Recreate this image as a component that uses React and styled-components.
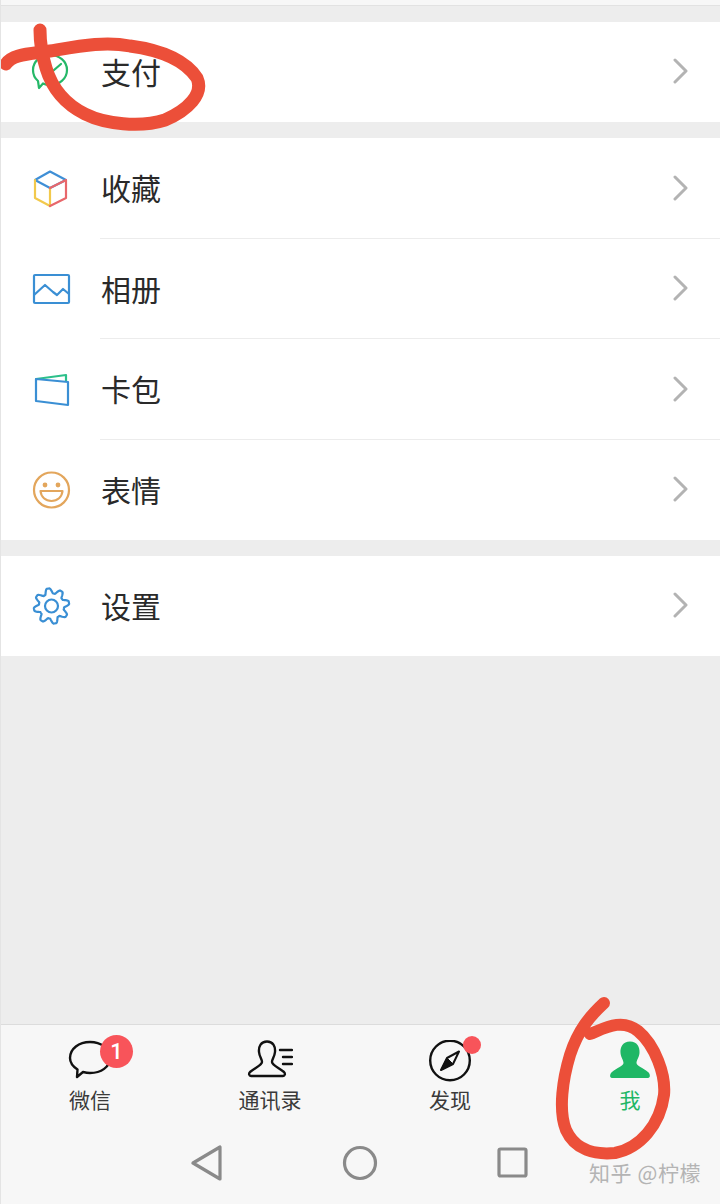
import React from "react"
import styled, { createGlobalStyle } from "styled-components"

const Global = createGlobalStyle`
  html, body { margin: 0; padding: 0; }
  body { background: #ededed; font-family: "Noto Sans CJK SC", "Noto Sans", sans-serif; }
`

const Screen = styled.div`
  position: relative;
  width: 720px;
  height: 1204px;
  display: flex;
  flex-direction: column;
  overflow: hidden;
  background: #ededed;
  border-left: 1px solid #e4e4e4;
  box-sizing: border-box;
`

const TopEdge = styled.div`
  height: 5px;
  margin-left: -1px;
  background: #f7f7f7;
  border-bottom: 1px solid #e2e2e2;
`

const Group = styled.section`
  margin-top: 16px;
  background: #fff;
  display: flex;
  flex-direction: column;
`

const Row = styled.div`
  position: relative;
  height: ${p => p.$h || 100}px;
  display: flex;
  align-items: center;
  padding-left: 30px;
  &:not(:last-child)::after {
    content: "";
    position: absolute;
    left: 99px;
    right: 0;
    bottom: 0;
    height: 1px;
    background: #ececec;
  }
`

const IconBox = styled.span`
  width: 40px;
  height: 40px;
  flex: none;
  display: block;
  svg { display: block; }
`

const Label = styled.span`
  margin-left: 30px;
  margin-top: -3px;
  font-size: 30px;
  line-height: 40px;
  color: #2a2a2a;
  flex: 1;
`

const Chevron = styled.svg`
  width: 16px;
  height: 26px;
  margin-right: 31px;
  margin-top: -2px;
  flex: none;
`

const Spacer = styled.div`
  flex: 1;
`

const TabBar = styled.footer`
  height: 180px;
  margin-left: -1px;
  background: #f7f7f7;
  border-top: 1px solid #dcdcdc;
  box-sizing: border-box;
  display: flex;
  flex-direction: column;
`

const Tabs = styled.nav`
  display: grid;
  grid-template-columns: repeat(4, 180px);
  padding-top: 15px;
`

const Tab = styled.div`
  display: flex;
  flex-direction: column;
  align-items: center;
  color: ${p => (p.$active ? "#1fb765" : "#3a3a3a")};
`

const TabIcon = styled.span`
  position: relative;
  display: block;
  width: 46px;
  height: 42px;
  svg { display: block; }
`

const TabLabel = styled.span`
  font-size: 21px;
  line-height: 30px;
  margin-top: 2px;
`

const CountBadge = styled.span`
  position: absolute;
  top: -5px;
  left: 33px;
  width: 33px;
  height: 33px;
  border-radius: 50%;
  background: #f8545a;
  color: #fff;
  font-family: "Roboto", sans-serif;
  font-size: 22px;
  font-weight: 500;
  line-height: 33px;
  text-align: center;
`

const Dot = styled.span`
  position: absolute;
  top: -4px;
  left: 36px;
  width: 18px;
  height: 18px;
  border-radius: 50%;
  background: #f8545a;
`

const NavKeys = styled.div`
  display: flex;
  padding: 31px 0 0 190px;
  gap: 118px;
`

const Watermark = styled.span`
  position: absolute;
  left: 588px;
  top: 1157px;
  font-size: 21px;
  line-height: 30px;
  color: #b4b4b4;
  letter-spacing: 0.6px;
  white-space: nowrap;
`

const Scribble = styled.svg`
  position: absolute;
  left: -1px;
  top: 0;
  pointer-events: none;
`

const WeChatPay = () => (
  <svg width="40" height="40" viewBox="0 0 40 40" fill="none" stroke="#25b868" strokeWidth="2.2">
    <path d="M19 3C28 3 36 9 36 18C36 27 28 33 19 33C16 33 14 32.500 12 31.500L8 36L7 29C3.500 26 2 22 2 18C2 9 10 3 19 3Z" strokeLinejoin="round" />
    <path d="M11 20L16 24L30 12" strokeLinecap="round" />
  </svg>
)

const Box3d = () => (
  <svg width="40" height="40" viewBox="0 0 40 40" fill="none" strokeWidth="2.2" strokeLinejoin="round" strokeLinecap="round">
    <path d="M4 11L19 2.500L35 11L19 19Z" stroke="#3f8fd6" />
    <path d="M4 11V29L19 37V19" stroke="#f2c94c" />
    <path d="M19 37L35 29V11L19 19" stroke="#e8676b" />
  </svg>
)

const Picture = () => (
  <svg width="40" height="40" viewBox="0 0 40 40" fill="none" stroke="#3a8fd4" strokeWidth="2.2" strokeLinejoin="round">
    <rect x="3" y="6" width="35" height="28" rx="1" />
    <path d="M3 26L14 16L22 23L26 26L32 20L38 25" />
  </svg>
)

const Wallet = () => (
  <svg width="40" height="40" viewBox="0 0 40 40" fill="none" strokeWidth="2.2" strokeLinejoin="round" strokeLinecap="round">
    <path d="M5 9L35 5V11" stroke="#2cc08a" />
    <path d="M5 9L37 12V35L5 31Z" stroke="#3a8fd4" />
  </svg>
)

const Smile = () => (
  <svg width="40" height="40" viewBox="0 0 40 40" fill="none" stroke="#e3a65c" strokeWidth="2.200">
    <circle cx="20.500" cy="20" r="17.500" />
    <circle cx="14" cy="15" r="2.400" fill="#e3a65c" stroke="none" />
    <circle cx="27" cy="15" r="2.400" fill="#e3a65c" stroke="none" />
    <path d="M9.500 21H31.500C31 27 26.500 31 20.500 31C14.500 31 10 27 9.500 21Z" strokeLinejoin="round" />
  </svg>
)

// eight rounded lobes, like the reference cog
const cogPath = () => {
  const pts = []
  for (let i = 0; i < 160; i++) {
    const t = (i / 160) * Math.PI * 2
    const wave = Math.max(-0.75, Math.min(0.75, Math.cos(8 * t + Math.PI / 2)))
    const r = 15.2 + 3.4 * wave
    pts.push(`${(20.5 + r * Math.cos(t)).toFixed(2)} ${(20 + r * Math.sin(t)).toFixed(2)}`)
  }
  return `M${pts.join("L")}Z`
}

const Gear = () => (
  <svg width="40" height="40" viewBox="0 0 40 40" fill="none" stroke="#3a8fd4" strokeWidth="2.200" strokeLinejoin="round">
    <path d={cogPath()} />
    <circle cx="20.500" cy="20" r="6.500" />
  </svg>
)

const Arrow = () => (
  <Chevron viewBox="0 0 16 26" fill="none" stroke="#b3b3b3" strokeWidth="3" strokeLinecap="round" strokeLinejoin="round">
    <path d="M2 2L13 13L2 24" />
  </Chevron>
)

const ChatIcon = () => (
  <svg width="46" height="42" viewBox="0 0 46 42" fill="none" stroke="#111" strokeWidth="2.400" strokeLinejoin="round">
    <path d="M23 2C34 2 43 8.500 43 18C43 27 34 33 23 33C20.500 33 18 32.500 16 32L10 37L10.500 29.500C6 26.500 3 22.500 3 18C3 8.500 12 2 23 2Z" />
  </svg>
)

const ContactsIcon = () => (
  <svg width="46" height="42" viewBox="0 0 46 42" fill="none" stroke="#111" strokeWidth="2.400" strokeLinejoin="round" strokeLinecap="round">
    <path d="M20 1.500C26 1.500 28.500 6.500 28 12C27.500 17 25 19 25 22C25 25 32 28 37 32C38.500 33.500 38 36 36 36H4C2 36 1.500 33.500 3 32C8 28 15 25 15 22C15 19 12.500 17 12 12C11.500 6.500 14 1.500 20 1.500Z" />
    <path d="M33 11H45M36 18H45M36 25H45" transform="translate(0 -1)" />
  </svg>
)

const CompassIcon = () => (
  <svg width="46" height="42" viewBox="0 0 46 42" fill="none" stroke="#111" strokeWidth="2.400" strokeLinejoin="round">
    <circle cx="23" cy="20.500" r="19.800" />
    <path d="M32 11.500L26 24L14 30L20 18Z" strokeWidth="2" />
    <path d="M20 18L26 24L14 30Z" fill="#111" strokeWidth="1" />
  </svg>
)

const PersonIcon = () => (
  <svg width="46" height="42" viewBox="0 0 46 42" fill="#1fb765">
    <path d="M23 1.500C30 1.500 33 7 32.500 13C32 18 29.500 20 29.500 23C29.500 25.500 36 28 41 32C43.500 34 43.500 38 41 38H5C2.500 38 2.500 34 5 32C10 28 16.500 25.500 16.500 23C16.500 20 14 18 13.500 13C13 7 16 1.500 23 1.500Z" />
  </svg>
)

const BackKey = () => (
  <svg width="34" height="36" viewBox="0 0 34 36" fill="none" stroke="#8a8a8a" strokeWidth="3.200" strokeLinejoin="round">
    <path d="M3 18L30 2V34Z" />
  </svg>
)

const HomeKey = () => (
  <svg width="36" height="36" viewBox="0 0 36 36" fill="none" stroke="#8a8a8a" strokeWidth="3.200">
    <circle cx="18" cy="18" r="15.500" />
  </svg>
)

const RecentKey = () => (
  <svg width="34" height="36" viewBox="0 0 34 36" fill="none" stroke="#8a8a8a" strokeWidth="3.200" strokeLinejoin="round">
    <rect x="3" y="4" width="27" height="27" rx="1.500" />
  </svg>
)

const App = () => (
  <Screen>
    <Global />
    <TopEdge />
    <Group>
      <Row>
        <IconBox><WeChatPay /></IconBox>
        <Label>支付</Label>
        <Arrow />
      </Row>
    </Group>
    <Group>
      <Row $h={101}>
        <IconBox><Box3d /></IconBox>
        <Label>收藏</Label>
        <Arrow />
      </Row>
      <Row>
        <IconBox><Picture /></IconBox>
        <Label>相册</Label>
        <Arrow />
      </Row>
      <Row $h={101}>
        <IconBox><Wallet /></IconBox>
        <Label>卡包</Label>
        <Arrow />
      </Row>
      <Row>
        <IconBox><Smile /></IconBox>
        <Label>表情</Label>
        <Arrow />
      </Row>
    </Group>
    <Group>
      <Row>
        <IconBox><Gear /></IconBox>
        <Label>设置</Label>
        <Arrow />
      </Row>
    </Group>
    <Spacer />
    <TabBar>
      <Tabs>
        <Tab>
          <TabIcon><ChatIcon /><CountBadge>1</CountBadge></TabIcon>
          <TabLabel>微信</TabLabel>
        </Tab>
        <Tab>
          <TabIcon><ContactsIcon /></TabIcon>
          <TabLabel>通讯录</TabLabel>
        </Tab>
        <Tab>
          <TabIcon><CompassIcon /><Dot /></TabIcon>
          <TabLabel>发现</TabLabel>
        </Tab>
        <Tab $active>
          <TabIcon><PersonIcon /></TabIcon>
          <TabLabel>我</TabLabel>
        </Tab>
      </Tabs>
      <NavKeys>
        <BackKey />
        <HomeKey />
        <RecentKey />
      </NavKeys>
    </TabBar>
    <Watermark>知乎 @柠檬</Watermark>
    <Scribble width="720" height="1204" viewBox="0 0 720 1204" fill="none" stroke="#ec4f39" strokeLinecap="round" strokeLinejoin="round">
      <path strokeWidth="13" d="M6 64C12 54 30 54 50 51C80 46 105 41 130 46C160 50 185 60 197 78C204 94 188 110 165 120C140 128 105 124 85 114C65 104 52 88 46 68C42 55 40 40 40 30" />
      <path strokeWidth="12" d="M604 1003C590 1016 578 1030 570 1055C563 1078 558 1110 566 1130C575 1150 595 1155 615 1153C640 1148 660 1125 664 1095C666 1075 655 1045 638 1031C622 1018 605 1028 590 1034" />
    </Scribble>
  </Screen>
)

export default App
